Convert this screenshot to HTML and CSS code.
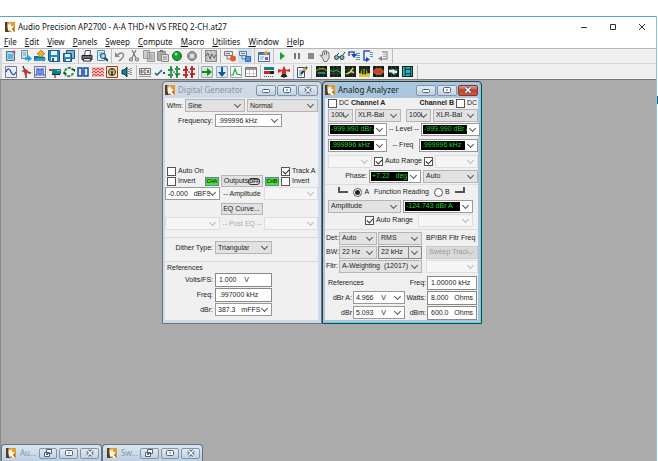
FILE: index.html
```html
<!DOCTYPE html>
<html lang="en">
<head>
<meta charset="utf-8">
<title>Audio Precision AP2700 - A-A THD+N VS FREQ 2-CH.at27</title>
<link rel="stylesheet" href="styles.css">
</head>
<body>
<svg class="defs" aria-hidden="true">
  <symbol id="logo" viewBox="0 0 12 12"><path fill="#e59a2b" d="M0 0h12v12H0z"/><path fill="#5d3a18" d="M0 0h3l2 12H0z"/><path fill="#fff" d="M3 1l2 3 1-3 2 4 3 1-2 2 2 4H8L6 9l-2 2-1-4z"/><path fill="#b86e18" d="M8 8l3-2v6z"/></symbol>
  <symbol id="restore" viewBox="0 0 10 8"><path fill="#fff" stroke="#555f6c" d="M3.500.5h5v4h-5zM1.500 3.500h5v4h-5z"/><path stroke="#555f6c" d="M3 5.500h2"/></symbol>
  <symbol id="min" viewBox="0 0 10 8"><rect x="1.500" y="3.500" width="7" height="3" rx="1" fill="#fff" stroke="#555f6c"/></symbol>
  <symbol id="max" viewBox="0 0 10 8"><rect x="1.500" y="1.500" width="7" height="5" rx="1" fill="#fff" stroke="#555f6c"/><path stroke="#555f6c" d="M4 4h2"/></symbol>
  <symbol id="close" viewBox="0 0 10 8"><path stroke="#555f6c" stroke-width="3.400" d="M2.500 1.500l5 5m0-5l-5 5"/><path stroke="#fff" stroke-width="1.500" d="M2.500 1.500l5 5m0-5l-5 5"/></symbol>
</svg>
<main class="app">
  <header class="titlebar">
    <svg class="logo"><use href="#logo"/></svg>
    <h1>Audio Precision AP2700 - A-A THD+N VS FREQ 2-CH.at27</h1>
    <div class="sysbuttons">
      <button aria-label="Minimize"><svg viewBox="0 0 8 8"><path d="M1 4.500h6"/></svg></button>
      <button aria-label="Maximize"><svg viewBox="0 0 8 8"><path d="M1.500 1.500h5v5h-5z"/></svg></button>
      <button aria-label="Close"><svg viewBox="0 0 8 8"><path d="M1 1l6 6m0-6l-6 6"/></svg></button>
    </div>
  </header>
  <nav class="menu">
    <a href="#"><u>F</u>ile</a><a href="#"><u>E</u>dit</a><a href="#"><u>V</u>iew</a><a href="#"><u>P</u>anels</a><a href="#"><u>S</u>weep</a><a href="#"><u>C</u>ompute</a><a href="#"><u>M</u>acro</a><a href="#"><u>U</u>tilities</a><a href="#"><u>W</u>indow</a><a href="#"><u>H</u>elp</a>
  </nav>
  <div class="toolbars">
    <div class="toolbar">
      <div class="group g5">
        <button aria-label="New"><svg viewBox="0 0 12 12"><path fill="#a9d9f2" stroke="#567" d="M1.500 1.500h8v9h-8z"/><path fill="#5db4e0" d="M3 4h5v5H3z"/><circle cx="9" cy="2" r="1.500" fill="#d33f7c"/></svg></button>
        <button aria-label="Export"><svg viewBox="0 0 12 12"><path fill="#c3e4f6" stroke="#789" d="M1.500.5h6v8h-6z"/><path stroke="#4aa9dc" d="M3 3h3M3 5h3"/><path fill="#28a0dd" d="M5 7h3V5l4 3.500L8 12v-2H5z"/></svg></button>
        <button aria-label="Open"><svg viewBox="0 0 12 12"><path fill="#136c98" d="M0 6h4l1 1h6v4H0z"/><path fill="#2b98c6" d="M2 8h10l-2 3H0z"/><path fill="#f2b21c" stroke="#655014" stroke-width=".5" d="M5 7V4H3l4-4 4 4H9v3z"/></svg></button>
        <button aria-label="Save"><svg viewBox="0 0 12 12"><path fill="#2a86b8" stroke="#18597f" d="M.5.5h11v11H2l-1.500-1z"/><path fill="#e8f5fc" d="M3 1h6v4H3zM3 7h6v4H3z"/><path fill="#18597f" d="M4 8h2v3H4z"/></svg></button>
        <button aria-label="Save all"><svg viewBox="0 0 12 12"><path fill="#75bade" stroke="#18597f" d="M3.500.5h8v8h-8z"/><path fill="#2a86b8" stroke="#18597f" d="M.5 3.500h8v8h-8z"/><path fill="#e8f5fc" d="M2 4h5v3H2zM3 9h4v2H3z"/></svg></button>
      </div>
      <span class="sep"></span>
      <div class="group g2">
        <button aria-label="Print"><svg viewBox="0 0 12 12"><path fill="#fff" stroke="#456" d="M3.500 5l1-4.500h5L9 5"/><path fill="#68717b" stroke="#222" d="M1 5.500h10v4H1z"/><path fill="#fff" stroke="#222" d="M3 8.500h6l1 2.500H2z"/></svg></button>
        <button aria-label="Print preview"><svg viewBox="0 0 12 12"><path fill="#dff1fb" stroke="#58a" d="M1.500.5h7v10h-7z"/><path stroke="#49a9dc" d="M3 3h4M3 5h2"/><circle cx="7" cy="6" r="2.500" fill="#a8dcf5" stroke="#124066"/><path stroke="#124066" stroke-width="2" d="M9 8l3 3"/></svg></button>
      </div>
      <span class="sep"></span>
      <div class="group g6">
        <button aria-label="Undo"><svg viewBox="0 0 12 12"><path fill="none" stroke="#888" stroke-width="1.500" d="M4 5c3-4 7-1 5 2-1 2-3 3-4 4"/><path fill="#888" d="M1 2v5h5z"/></svg></button>
        <button aria-label="Cut"><svg viewBox="0 0 12 12"><g fill="none" stroke="#777" stroke-width="1.200"><path d="M4 0l4 8M8 0L4 8"/><circle cx="3" cy="9.500" r="1.500"/><circle cx="9" cy="9.500" r="1.500"/></g></svg></button>
        <button aria-label="Copy"><svg viewBox="0 0 12 12"><path fill="#ccc" stroke="#999" d="M.5.5h6v8h-6zM4.500 2.500h7v9h-7z"/><path stroke="#999" d="M6 5h4M6 7h4M6 9h4"/></svg></button>
        <button aria-label="Paste"><svg viewBox="0 0 12 12"><path fill="#aaa" stroke="#888" d="M.5 1.500h8v9h-8z"/><path fill="#777" d="M3 0h3v2H3z"/><path fill="#ddd" stroke="#888" d="M4.500 4.500h7v7h-7z"/><path stroke="#888" d="M6 7h4M6 9h4"/></svg></button>
        <button aria-label="Start"><svg viewBox="0 0 12 12"><circle cx="6" cy="6" r="4.500" fill="#15a52c" stroke="#0b651c"/><circle cx="5" cy="4" r="1.500" fill="#8df097"/></svg></button>
        <button aria-label="Cancel"><svg viewBox="0 0 12 12"><circle cx="6" cy="6" r="4.500" fill="#999" stroke="#777"/><path stroke="#eee" stroke-width="1.500" d="M4 4l4 4m0-4L4 8"/></svg></button>
      </div>
      <span class="sep wide"></span>
      <div class="group g1">
        <button aria-label="Waveform"><svg viewBox="0 0 12 12"><path fill="#bbb" stroke="#888" d="M.5.5h11v11H.5z"/><path stroke="#eee" d="M4 1v10M8 1v10"/><path fill="none" stroke="#666" d="M1 6l2-3 2 6 2-5 2 4 2-3"/></svg></button>
      </div>
      <span class="sep wide"></span>
      <div class="group g2">
        <button aria-label="Record"><svg viewBox="0 0 12 12"><path fill="#e6e6e6" stroke="#777" d="M.5 1.500h8v4h-8z"/><path fill="none" stroke="#777" d="M3 6v3h3M2 3.500h4"/><circle cx="9" cy="8.500" r="3" fill="#e55a2c"/></svg></button>
        <button class="on" aria-label="Link"><svg viewBox="0 0 12 12"><path fill="#e3edf8" stroke="#678" d="M.5 1.500h7v4h-7z"/><path fill="none" stroke="#678" d="M3 6v3h3M2 3.500h4"/><path fill="#5b93dc" stroke="#2f66ae" d="M6.500 6.500h5v5h-5z"/></svg></button>
      </div>
      <span class="sep wide"></span>
      <div class="group g1">
        <button aria-label="Macro editor"><svg viewBox="0 0 12 12"><path fill="#edf5ff" stroke="#4668a8" d="M.5 2.500h11v9H.5z"/><path fill="#4979c4" d="M1 3h10v2H1z"/><path stroke="#7aa6dd" d="M2 7h4M2 9h3"/><path fill="#e6a329" d="M8 0l1 2 2 1-2 1-1 2-1-2-2-1 2-1z"/><path fill="#8a5bb5" d="M7 7h3v3H7z"/></svg></button>
      </div>
      <span class="sep"></span>
      <div class="group g8">
        <button aria-label="Run"><svg viewBox="0 0 12 12"><path fill="#17a52f" d="M4 2l5 4-5 4z"/></svg></button>
        <button aria-label="Pause"><svg viewBox="0 0 12 12"><path fill="#777" d="M3 3h2v6H3zM7 3h2v6H7z"/></svg></button>
        <button aria-label="Stop"><svg viewBox="0 0 12 12"><path fill="#888" d="M3 3h6v6H3z"/></svg></button>
        <button aria-label="Break"><svg viewBox="0 0 12 12"><path fill="#ddd" stroke="#777" d="M3.500 8L1 5.500l1-.5 1.500 1V2h1V1h1.500V.8h1.500V2H9l1 1v5l-2 3.500H5z"/><path stroke="#777" d="M5.500 2v3M7.500 2v3"/></svg></button>
        <button aria-label="Watch"><svg viewBox="0 0 12 12"><g fill="#8bb" stroke="#17434a"><circle cx="2.500" cy="7.500" r="2"/><circle cx="8" cy="7.500" r="2"/><path fill="none" d="M4.500 7h2M3 5l2-2M9 5l2-3"/></g></svg></button>
        <button aria-label="Step into"><svg viewBox="0 0 12 12"><path fill="none" stroke="#35b" stroke-width="1.500" d="M1 6V2h5v3"/><path fill="#24a" d="M3 4h6L6 8z"/><path stroke="#49c" d="M8 3.500h4M8 5.500h4M8 7.500h4M8 9.500h4"/></svg></button>
        <button aria-label="Step over"><svg viewBox="0 0 12 12"><path fill="none" stroke="#35b" stroke-width="1.500" d="M8 1H2v9h3"/><path fill="#24a" d="M4 7v5l4-2.500z"/><path stroke="#49c" d="M8 2.500h3M8 4.500h3M8 6.500h3"/></svg></button>
        <button aria-label="Step out"><svg viewBox="0 0 12 12"><path fill="none" stroke="#999" stroke-width="1.300" d="M5 2h5v7H5"/><path fill="#888" d="M5 6v5L1 8.500z"/><path stroke="#aaa" d="M6 4.500h3M6 6.500h3"/></svg></button>
      </div>
      <span class="sep"></span>
    </div>
    <div class="toolbar">
      <div class="group g9">
        <button aria-label="Analog generator"><svg viewBox="0 0 12 12"><path fill="#edf1ff" stroke="#778" d="M.5.5h11v11H.5z"/><path fill="none" stroke="#2849c8" stroke-width="1.300" d="M1 6c2-5 4-3 5 0s3 4 5 0"/></svg></button>
        <button aria-label="Analog analyzer"><svg viewBox="0 0 12 12"><path fill="none" stroke="#333" stroke-width="1.300" d="M3 0l2 5 6 2M6 6v6"/><path fill="#d12d2d" d="M1 5l5-2 5 5-4-1-2 3-1-4z"/></svg></button>
        <button aria-label="Digital generator"><svg viewBox="0 0 12 12"><path fill="#e3e5ff" stroke="#778" d="M.5.5h11v11H.5z"/><path fill="none" stroke="#2849c8" stroke-width="1.200" d="M1 9h2V3h2v6h2V3h2v6h2"/></svg></button>
        <button aria-label="Digital analyzer"><svg viewBox="0 0 12 12"><path fill="#d12d2d" d="M0 3h5v2H0z"/><path fill="#168080" d="M3 3h9v5H3z"/><path stroke="#123" d="M3 8.500h8M6 9v3"/><path fill="#4dd" d="M8 4h3v1H8z"/></svg></button>
        <button aria-label="Sync"><svg viewBox="0 0 12 12"><path fill="none" stroke="#318d51" stroke-width="2" stroke-dasharray="3 1" d="M2 5c1-4 7-4 8-1M10 7c-1 4-7 4-8 1"/><path fill="#174d2a" d="M8 3h4v3zM0 8h4L1 5z"/></svg></button>
        <button aria-label="Digital I/O"><svg viewBox="0 0 12 12"><path fill="#d5ecff" stroke="#164b9b" stroke-width="1.500" d="M1 2h4v8H1zM7 2h4v8H7z"/><path stroke="#164b9b" d="M5 6h2"/></svg></button>
        <button aria-label="Jitter"><svg viewBox="0 0 12 12"><path fill="#f6b9b1" d="M0 1h12v10H0z"/><path fill="none" stroke="#cc4a40" d="M0 4l2-2 2 2 2-2 2 2 2-2 2 2M0 7l2-2 2 2 2-2 2 2 2-2 2 2M0 10l2-2 2 2 2-2 2 2 2-2 2 2"/></svg></button>
        <button aria-label="Status bits"><svg viewBox="0 0 12 12"><path fill="#f4dcac" stroke="#a03f2c" d="M.5.5h11v11H.5z"/><circle cx="6" cy="6" r="3.500" fill="#edbd3a" stroke="#234"/><path stroke="#124bab" stroke-width="2" d="M6 3v1M6 5v4"/></svg></button>
        <button aria-label="Speaker"><svg viewBox="0 0 12 12"><path fill="#187b91" stroke="#0d3c47" d="M1 4h2l3-3v10L3 8H1z"/><path stroke="#333" stroke-dasharray="1 1" d="M8 3v6M10 2v8"/></svg></button>
      </div>
      <span class="sep"></span>
      <div class="group g4">
        <button aria-label="DCX"><svg viewBox="0 0 12 12"><path fill="#eee" stroke="#777" d="M.5 2.500h11v6H.5z"/><path fill="none" stroke="#444" stroke-width=".8" d="M2 4v3h1V4zM7 4H5v3h2M8 4l2 3M10 4L8 7"/><path stroke="#999" d="M0 10.500h12"/></svg></button>
        <button aria-label="Switcher"><svg viewBox="0 0 12 12"><path fill="none" stroke="#146081" stroke-width="1.500" d="M1 7l2 2 5-5"/><path fill="#146081" d="M9 6h2v2H9z"/></svg></button>
        <button aria-label="Regulation"><svg viewBox="0 0 12 12"><path stroke="#2c9b50" stroke-width="2" d="M3 0v12M9 0v12M0 4h5M7 8h5M7 3h5M0 9h5"/><path stroke="#164f2b" d="M5 6h2M3 2v2M9 8v2"/></svg></button>
        <button aria-label="Settling"><svg viewBox="0 0 12 12"><path stroke="#c6292e" stroke-width="2" d="M3 0v12M9 0v12M0 4h5M7 8h5M7 3h5M0 9h5"/><path stroke="#333" d="M5 6h2M3 2v2M9 8v2"/></svg></button>
      </div>
      <span class="sep"></span>
      <div class="group g4">
        <button aria-label="Sweep"><svg viewBox="0 0 12 12"><path fill="#d3e7d5" stroke="#9ab" d="M.5.5h11v11H.5z"/><path fill="#138b23" d="M1 5h5V2l5 4-5 4V7H1z"/></svg></button>
        <button aria-label="Data down"><svg viewBox="0 0 12 12"><path fill="#dce9f3" stroke="#9ab" d="M.5.5h11v11H.5z"/><path fill="#135aa6" d="M5 1h2v5h3l-4 5-4-5h3z"/></svg></button>
        <button aria-label="Graph"><svg viewBox="0 0 12 12"><path fill="#f3fff3" stroke="#9ab" d="M.5.5h11v11H.5z"/><path fill="none" stroke="#2b9b42" stroke-width="1.200" d="M1 9h2l2-6 2 5 4 1"/></svg></button>
        <button aria-label="Data table"><svg viewBox="0 0 12 12"><path fill="#fff" stroke="#777" d="M.5 1.500h11v9H.5z"/><path fill="#999" d="M1 2h10v2H1z"/><path stroke="#ccc" d="M4.500 4v6M8.500 4v6M1 7.500h10"/></svg></button>
      </div>
      <span class="sep"></span>
      <div class="group g2">
        <button aria-label="Bar graph"><svg viewBox="0 0 12 12"><path fill="#158080" d="M1 1h10v3H1z"/><path fill="#c92727" d="M1 5h6v3H1z"/><path fill="#222" d="M7 5h4v3H7z"/><path stroke="#555" stroke-dasharray="1 1" d="M1 10.500h10"/></svg></button>
        <button aria-label="Transmit"><svg viewBox="0 0 12 12"><path stroke="#333" stroke-width="1.300" d="M6 1v11M3 11l3-5 3 5"/><path fill="#d12d2d" d="M0 3l4 1 2-4 2 4 4-1v3L8 5v3H4V5L0 7z"/></svg></button>
      </div>
      <span class="sep"></span>
      <div class="group g1">
        <button aria-label="Edit comments"><svg viewBox="0 0 12 12"><path fill="#fff" stroke="#456" d="M1.500 1.500h7v10h-7z"/><path stroke="#58a" d="M3 5h4M3 7h4M3 9h3"/><path stroke="#1a4157" stroke-width="2" d="M5 8l6-7"/><path fill="#df9e2b" d="M7 2h3v3H7z"/></svg></button>
      </div>
      <span class="sep wide"></span>
      <div class="group g7 scopes">
        <button aria-label="Response"><svg viewBox="0 0 12 12"><path class="screen" d="M0 0h12v12H0z"/><path class="lines" d="M4 0v12M8 0v12M0 4h12M0 8h12"/><path fill="none" stroke="#e0bc36" d="M0 6l3-3h6l3 3"/><path stroke="#21a9a9" stroke-width="1.500" d="M2 7.500h8"/></svg></button>
        <button aria-label="Level"><svg viewBox="0 0 12 12"><path class="screen" d="M0 0h12v12H0z"/><path class="lines" d="M4 0v12M8 0v12M0 4h12M0 8h12"/><path fill="none" stroke="#35bb45" d="M0 5l3 1 4-1 5 2"/></svg></button>
        <button aria-label="Linearity"><svg viewBox="0 0 12 12"><path class="screen" d="M0 0h12v12H0z"/><path class="lines" d="M4 0v12M8 0v12M0 4h12M0 8h12"/><path fill="none" stroke="#eee36a" stroke-width="1.500" d="M1 9l4-2 4-5M6 6l4 1"/></svg></button>
        <button aria-label="Spectrum"><svg viewBox="0 0 12 12"><path class="screen" d="M0 0h12v12H0z"/><path class="lines" d="M4 0v12M8 0v12M0 4h12"/><path fill="#d9c62b" d="M0 12V8h2V5h1v4h2V3h1v6h2V5h1v3h3v4z"/></svg></button>
        <button aria-label="Distortion"><svg viewBox="0 0 12 12"><path class="screen" d="M0 0h12v12H0z"/><path class="lines" d="M4 0v12M8 0v12"/><path fill="#d63b2a" stroke="#d9af2b" stroke-width=".6" d="M0 6l3-3h6l3 3-3 3H3z"/></svg></button>
        <button aria-label="Crosstalk"><svg viewBox="0 0 12 12"><path class="screen" d="M0 0h12v12H0z"/><path class="lines" d="M4 0v12M8 0v12M0 4h12"/><path fill="#d5f2f2" d="M1 4h4V3l3 2h2v3H7v2L4 7H1z"/></svg></button>
        <button aria-label="Digital test"><svg viewBox="0 0 12 12"><path class="screen" d="M0 0h12v12H0z"/><path fill="#20b8bd" d="M1 1h2v10H1zM4 1h5v2H4zM4 4h5v4H4zM4 9h5v2H4zM10 1h1v10h-1z"/></svg></button>
      </div>
      <span class="sep"></span>
    </div>
  </div>

  <section class="workspace">
    <article class="panel generator">
      <header class="panelbar"><svg class="logo"><use href="#logo"/></svg><h2>Digital Generator</h2>
        <button aria-label="Minimize"><svg><use href="#min"/></svg></button><button aria-label="Maximize"><svg><use href="#max"/></svg></button><button aria-label="Close"><svg><use href="#close"/></svg></button></header>
      <form class="content">
        <div class="row wave"><label for="wfm">Wfm:</label><span class="combo"><select id="wfm"><option>Sine</option></select></span><span class="combo"><select aria-label="Wave mode"><option>Normal</option></select></span></div>
        <div class="row freq"><label for="gf">Frequency:</label><span class="combo edit"><select id="gf"><option>.999996 kHz</option></select></span></div>
        <div class="outputs">
          <label class="check"><input type="checkbox">Auto On</label><label class="check right"><input type="checkbox" checked>Track A</label>
          <label class="check"><input type="checkbox">Invert</label>
          <button type="button" class="ch">CHA</button><button type="button" class="push out">Outputs<b>OFF</b></button><button type="button" class="ch">CHB</button>
          <label class="check right"><input type="checkbox">Invert</label>
        </div>
        <div class="row three"><span class="combo edit"><select aria-label="Amplitude A"><option>-0.000 &nbsp; dBFS</option></select></span><span>-- Amplitude</span><span class="combo off"><select aria-label="Amplitude B" disabled><option></option></select></span></div>
        <div class="row middle"><button type="button" class="push">EQ Curve...</button></div>
        <div class="row three"><span class="combo off"><select aria-label="Post EQ A" disabled><option></option></select></span><span class="dim">-- Post EQ --</span><span class="combo off"><select aria-label="Post EQ B" disabled><option></option></select></span></div>
        <hr>
        <div class="row field"><label for="dt">Dither Type:</label><span class="combo"><select id="dt"><option>Triangular</option></select></span></div>
        <hr class="low">
        <h3>References</h3>
        <div class="row field"><label for="vfs">Volts/FS:</label><input id="vfs" value="1.000    V"></div>
        <div class="row field"><label for="rf">Freq:</label><input id="rf" value=".997000 kHz"></div>
        <div class="row field"><label for="rd">dBr:</label><span class="combo edit"><select id="rd"><option>387.3 &nbsp; mFFS</option></select></span></div>
      </form>
    </article>

    <article class="panel analyzer active">
      <header class="panelbar"><svg class="logo"><use href="#logo"/></svg><h2>Analog Analyzer</h2>
        <button aria-label="Minimize"><svg><use href="#min"/></svg></button><button aria-label="Maximize"><svg><use href="#max"/></svg></button><button class="red" aria-label="Close"><svg><use href="#close"/></svg></button></header>
      <form class="content">
        <div class="channels"><label class="check"><input type="checkbox">DC</label><strong>Channel A</strong><strong class="b">Channel B</strong><label class="check"><input type="checkbox">DC</label></div>
        <div class="row inputs"><span class="combo narrow"><select aria-label="Impedance A"><option>100k</option></select></span><span class="combo"><select aria-label="Input A"><option>XLR-Bal</option></select></span><i></i><span class="combo narrow"><select aria-label="Impedance B"><option>100k</option></select></span><span class="combo"><select aria-label="Input B"><option>XLR-Bal</option></select></span></div>
        <div class="row meters"><span class="combo lcd"><select aria-label="Level A"><option>-999.990 dBr A</option></select></span><span>-- Level --</span><span class="combo lcd"><select aria-label="Level B"><option>-999.990 dBr A</option></select></span></div>
        <div class="row meters second"><span class="combo lcd"><select aria-label="Frequency A"><option>.999996 kHz</option></select></span><span>-- Freq</span><span class="combo lcd"><select aria-label="Frequency B"><option>.999996 kHz</option></select></span></div>
        <div class="row range"><span class="combo off"><select aria-label="Range A" disabled><option></option></select></span><label class="check"><input type="checkbox" checked>Auto Range</label><input type="checkbox" checked aria-label="Auto Range B"><span class="combo off"><select aria-label="Range B" disabled><option></option></select></span></div>
        <div class="row phase"><label for="ph">Phase:</label><span class="combo lcd"><select id="ph"><option>+7.22 &nbsp; deg</option></select></span><span class="combo"><select aria-label="Phase range"><option>Auto</option></select></span></div>
        <div class="reading"><i class="hook"></i><label class="check"><input type="radio" name="fn" checked>A</label><span>Function Reading</span><label class="check"><input type="radio" name="fn">B</label><i class="hook flip"></i></div>
        <div class="row function"><span class="combo"><select aria-label="Function"><option>Amplitude</option></select></span><span class="combo lcd"><select aria-label="Function reading"><option>-124.743 dBr A</option></select></span></div>
        <div class="row autorange"><label class="check"><input type="checkbox" checked>Auto Range</label><span class="combo off"><select aria-label="Function range" disabled><option></option></select></span></div>
        <hr>
        <div class="row filter"><label for="det">Det:</label><span class="combo"><select id="det"><option>Auto</option></select></span><span class="combo"><select aria-label="Detector"><option>RMS</option></select></span><span>BP/BR Fltr Freq</span></div>
        <div class="row filter"><label for="bw">BW:</label><span class="combo"><select id="bw"><option>22 Hz</option></select></span><span class="combo focus"><select aria-label="Bandwidth high"><option>22 kHz</option></select></span><span class="combo off gray"><select aria-label="Filter tracking" disabled><option>Sweep Track</option></select></span></div>
        <div class="row filter"><label for="fl">Fltr:</label><span class="combo span2"><select id="fl"><option>A-Weighting &nbsp;(12017)</option></select></span><span class="combo off"><select aria-label="Filter frequency" disabled><option></option></select></span></div>
        <div class="references">
          <div class="row refs"><h3>References</h3><label for="af">Freq:</label><input id="af" value="1.00000 kHz"></div>
          <div class="row refs"><label for="da">dBr A:</label><span class="combo edit"><select id="da"><option>4.966 &nbsp; &nbsp;V</option></select></span><label for="wt">Watts:</label><input id="wt" value="8.000   Ohms"></div>
          <div class="row refs"><label for="db">dBr</label><span class="combo edit"><select id="db"><option>5.093 &nbsp; &nbsp;V</option></select></span><label for="dm">dBm:</label><input id="dm" value="600.0   Ohms"></div>
        </div>
      </form>
    </article>

    <footer class="tray">
      <div class="panelbar"><svg class="logo"><use href="#logo"/></svg><h2>Au...</h2><button aria-label="Restore"><svg><use href="#restore"/></svg></button><button aria-label="Maximize"><svg><use href="#max"/></svg></button><button aria-label="Close"><svg><use href="#close"/></svg></button></div>
      <div class="panelbar"><svg class="logo"><use href="#logo"/></svg><h2>Sw...</h2><button aria-label="Restore"><svg><use href="#restore"/></svg></button><button aria-label="Maximize"><svg><use href="#max"/></svg></button><button aria-label="Close"><svg><use href="#close"/></svg></button></div>
    </footer>
  </section>
</main>
</body>
</html>
```
FILE: styles.css
```css
* { box-sizing: border-box; }
body {
  margin: 0;
  height: 100vh;
  padding: 16px 1px 0 0;
  display: flex;
  background: linear-gradient(#17677f, #17677f) right 96px / 1px 8px no-repeat, #fff;
  font: 7px/10px "Liberation Sans", Arial, sans-serif;
  color: #222;
  overflow: hidden;
}
button, input, select { font: inherit; color: inherit; margin: 0; padding: 0; }
button { display: flex; align-items: center; justify-content: center; border: 0; background: none; }
h1, h2, h3 { margin: 0; font-size: inherit; font-weight: normal; }
.defs { position: absolute; width: 0; height: 0; }

.app {
  flex: 1;
  min-width: 0;
  display: flex;
  flex-direction: column;
  border-top: 1px solid #5b9fd4;
  border-right: 1px solid #8fc0e6;
}
.titlebar { display: flex; align-items: center; height: 19px; padding-left: 5px; gap: 3px; font: 8px/12px "Noto Sans", sans-serif; color: #111; }
.titlebar h1 { flex: 1; }
.logo { width: 10px; height: 10px; flex: none; }
.sysbuttons { display: flex; }
.sysbuttons button { width: 29px; height: 17px; }
.sysbuttons svg { width: 8px; height: 8px; fill: none; stroke: #333; }
.menu { display: flex; gap: 8px; height: 13px; padding-left: 4px; border-bottom: 1px solid #b5b5b5; font: 8px/11px "Noto Sans", sans-serif; }
.menu a { color: #111; text-decoration: none; }
.menu u { text-underline-offset: 1px; }

.toolbars { background: #f0f0f0; border-bottom: 1px solid #777; }
.toolbar { display: flex; align-items: center; height: 15px; padding-left: 2px; border-left: 2px solid #d5d5d5; }
.toolbar:first-child { border-bottom: 1px solid #d5d5d5; }
.group { display: flex; flex: none; }
.group button { flex: 1; height: 14px; }
.group svg { width: 12px; height: 12px; }
.g1 { width: 14px; }
.g2 { width: 29px; }
.g4 { width: 58px; }
.g5 { width: 72px; }
.g6 { width: 86px; }
.g7 { width: 101px; }
.g8 { width: 115px; }
.g9 { width: 130px; }
.group .on { background: #cbe4fa; }
.sep { width: 4px; height: 14px; flex: none; background: linear-gradient(#bbb, #bbb) center / 1px 100% no-repeat; }
.sep.wide { width: 5px; }
.scopes svg { width: 11px; height: 11px; }
.screen { fill: #152018; }
.lines { fill: none; stroke: #47604b; stroke-width: .5; }

.workspace { position: relative; flex: 1; background: #ababab; border-left: 1px solid #8a8a8a; overflow: hidden; }
.panel {
  position: absolute;
  top: 1px;
  width: 160px;
  padding: 0 3px 3px 2px;
  border: 1px solid #6b747e;
  border-radius: 4px 4px 0 0;
  background: #cfdae7;
}
.generator { left: 161px; }
.analyzer { left: 321px; }
.active { border-color: #23424c; background: #a9c6df; box-shadow: inset -1px -1px #55d8e8; }
.panelbar { display: flex; align-items: center; gap: 1px; height: 16px; font: 8px/12px "Noto Sans", sans-serif; color: #8994a0; }
.panelbar h2 { flex: 1; padding-left: 2px; }
.active .panelbar { color: #151c24; }
.panelbar button { width: 20px; height: 11px; border: 1px solid #8394a9; border-radius: 2px; background: linear-gradient(#e0eaf5, #c2d1e2); }
.panelbar button svg { width: 10px; height: 8px; }
.panelbar .red { border-color: #7c3530; background: linear-gradient(#e09b8d, #c4402e 50%, #cf5c42); }
.tray { position: absolute; left: 0; bottom: 0; display: flex; }
.tray .panelbar { width: 101px; height: 17px; padding: 0 2px 0 4px; gap: 2px; border: 1px solid #657180; border-bottom: 0; border-radius: 4px 4px 0 0; background: linear-gradient(#dbe6f2, #bdcfe2); }

.content { height: 222px; background: #f0f0f0; }
.row { display: grid; align-items: center; height: 15px; column-gap: 2px; white-space: nowrap; }
.content label { white-space: nowrap; }
.row > label:not(.check) { text-align: right; }
.combo { position: relative; display: block; min-width: 0; height: 13px; }
.combo select { display: block; width: 100%; height: 100%; padding: 0 9px 0 2px; border: 1px solid #b5b5b5; border-radius: 0; background: #e2e2e2; appearance: none; }
.combo::after { content: ""; position: absolute; right: 5px; top: 3px; width: 4px; height: 4px; border: solid #555; border-width: 0 1px 1px 0; transform: rotate(45deg); pointer-events: none; }
.narrow select { padding-right: 8px; }
.edit select { background: #fff; border-color: #999; }
.off select { background: #f5f5f5; border-color: #ddd; opacity: 1; color: #999; }
.off::after { border-color: #bbb; }
.gray select { background: #d9d9d9; border-color: #ccc; }
.lcd select { padding-right: 12px; border-color: #999; background: linear-gradient(#000, #000) 1px 1px / calc(100% - 13px) calc(100% - 2px) no-repeat, #fff; color: #1fd12f; }
.focus select { background: linear-gradient(#888, #888) calc(100% - 12px) 0 / 1px 100% no-repeat, #e2e2e2; border-color: #888; }
.content input:not([type]) { width: 100%; min-width: 0; height: 14px; padding: 0 3px; border: 1px solid #888; background: #fff; }
input[type="checkbox"], input[type="radio"] { display: grid; place-items: center; flex: none; width: 9px; height: 9px; appearance: none; border: 1px solid #555; background: #fff; }
input[type="checkbox"]:checked::before { content: ""; width: 5px; height: 3px; border: solid #333; border-width: 0 0 1px 1px; transform: rotate(-45deg); }
input[type="radio"] { border-radius: 50%; }
input[type="radio"]:checked::before { content: ""; width: 5px; height: 5px; border-radius: 50%; background: #222; }
.check { display: flex; align-items: center; gap: 2px; }
.push { height: 12px; border: 1px solid #b5b5b5; background: #e1e1e1; }
.dim { color: #aaa; }
hr { margin: 6px 0 2px; border: 0; border-top: 1px solid #dadada; }

.wave { grid-template-columns: 18px 60px 1fr; }
.freq { grid-template-columns: 48px 67px; }
.outputs { display: grid; grid-template-columns: 36px 14px 42px 14px 1fr; grid-template-rows: 10px 10px; gap: 0 2px; margin-top: 38px; padding-left: 2px; align-items: center; }
.outputs .check:first-child { grid-column: span 2; }
.outputs .right { grid-column: 5; }
.ch { height: 9px; border: 1px solid #5588a0; background: #56dc36; font: bold 5px/7px "Liberation Sans", sans-serif; color: #123d12; }
.out { height: 12px; }
.out b { border: 1px solid #333; border-radius: 3px; font-size: 5px; line-height: 5px; }
.three { grid-template-columns: 55px 1fr 54px; text-align: center; }
.middle { justify-content: center; }
.middle .push { width: 42px; }
.field { grid-template-columns: 48px 57px; }
.content h3 { padding-left: 2px; line-height: 8px; }

.channels { display: grid; grid-template-columns: 23px 1fr 1fr 22px; height: 10px; padding-left: 3px; align-items: center; }
.channels .b { text-align: right; padding-right: 2px; }
.analyzer .row { height: 14px; padding-left: 3px; }
.inputs { grid-template-columns: 25px 46px 1px 25px 1fr; }
.meters { grid-template-columns: 59px 1fr 59px; text-align: center; }
.analyzer .second { height: 17px; padding-top: 1px; }
.range { grid-template-columns: 44px 48px 9px 1fr; }
.analyzer .range { height: 16px; }
.phase { grid-template-columns: 39px 52px 1fr; }
.reading { display: flex; justify-content: center; align-items: center; gap: 5px; height: 15px; border-top: 1px solid #ddd; margin-top: 1px; }
.hook { width: 10px; height: 6px; border: solid #555; border-width: 0 0 2px 2px; align-self: flex-start; margin-top: 2px; }
.flip { border-width: 0 2px 2px 0; }
.function { grid-template-columns: 73px 70px; }
.autorange { grid-template-columns: 88px 55px; }
.autorange .check { justify-self: end; padding-right: 3px; }
.analyzer hr { margin: 2px 0 1px; }
.analyzer .filter { grid-template-columns: 12px 38px 44px 1fr; column-gap: 1px; padding-left: 1px; }
.filter > span:last-child { margin-left: 3px; }
.span2 { grid-column: span 2; }
.references { margin-top: 2px; }
.analyzer .refs { grid-template-columns: 24px 52px 20px 1fr; column-gap: 1px; height: 15px; padding-right: 1px; }
.refs h3 { grid-column: span 2; padding: 0; }
```
